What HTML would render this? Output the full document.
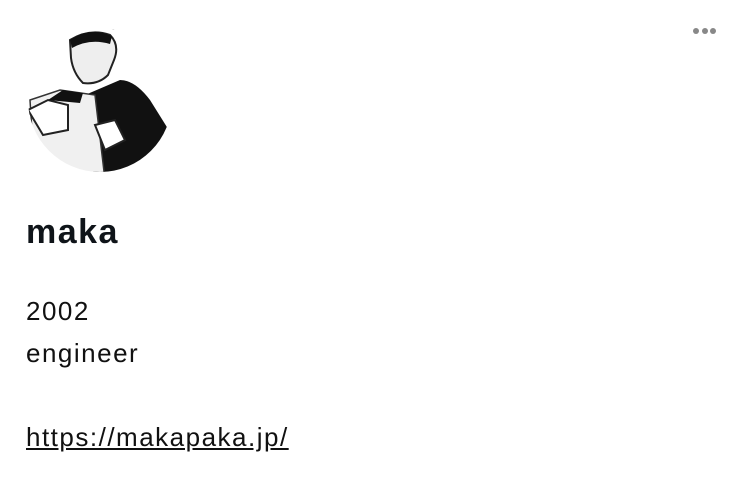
<!DOCTYPE html>
<html><head><style>
body{margin:0;background:#fff;width:740px;height:490px;overflow:hidden;font-family:"Liberation Sans",sans-serif;color:#111;position:relative}
.n{position:absolute;left:26px;top:213px;font-size:34px;font-weight:bold;color:#0f1419;letter-spacing:1.5px}
.t{position:absolute;left:26px;font-size:26px;color:#111;letter-spacing:1.5px}
.dots{position:absolute;left:693px;top:28px}
.dots i{display:inline-block;width:6px;height:6px;border-radius:50%;background:#888;margin-right:2.5px;vertical-align:top}
</style></head><body>
<svg style="position:absolute;left:0;top:0" width="200" height="180" viewBox="0 0 200 180">
<defs><clipPath id="c"><circle cx="100" cy="100" r="72"/></clipPath></defs>
<g clip-path="url(#c)">
<rect x="20" y="20" width="160" height="160" fill="#fff"/>
<path d="M108 20 q8 -4 12 4 q-4 8 -10 4z" fill="#111"/>
<path d="M70 40 q20 -12 40 -5 q10 10 4 25 l-6 15 q-10 10 -25 8 q-10 -10 -12 -25z" fill="#eee" stroke="#222" stroke-width="2"/>
<path d="M70 40 q20 -14 42 -4 l-2 8 q-20 -6 -38 4z" fill="#111"/>
<path d="M85 95 l35 -15 q15 0 30 20 l25 40 l-10 40 h-70 q-8 -30 -10 -85z" fill="#111"/>
<path d="M30 100 l30 -10 l35 5 l10 85 h-70z" fill="#f0f0f0" stroke="#333" stroke-width="1.5"/>
<path d="M28 110 l20 -10 l20 5 l0 25 l-25 5z" fill="#fff" stroke="#222" stroke-width="2"/>
<path d="M95 125 l20 -5 l10 20 l-20 10z" fill="#fff" stroke="#222" stroke-width="2"/>
<path d="M48 100 l15 -10 l20 3 l-3 10z" fill="#111"/>
</g>
</svg>
<div class="dots"><i></i><i></i><i></i></div>
<div class="n">maka</div>
<div class="t" style="top:296px">2002</div>
<div class="t" style="top:338px">engineer</div>
<div class="t" style="top:422px;text-decoration:underline">https://makapaka.jp/</div>
</body></html>
